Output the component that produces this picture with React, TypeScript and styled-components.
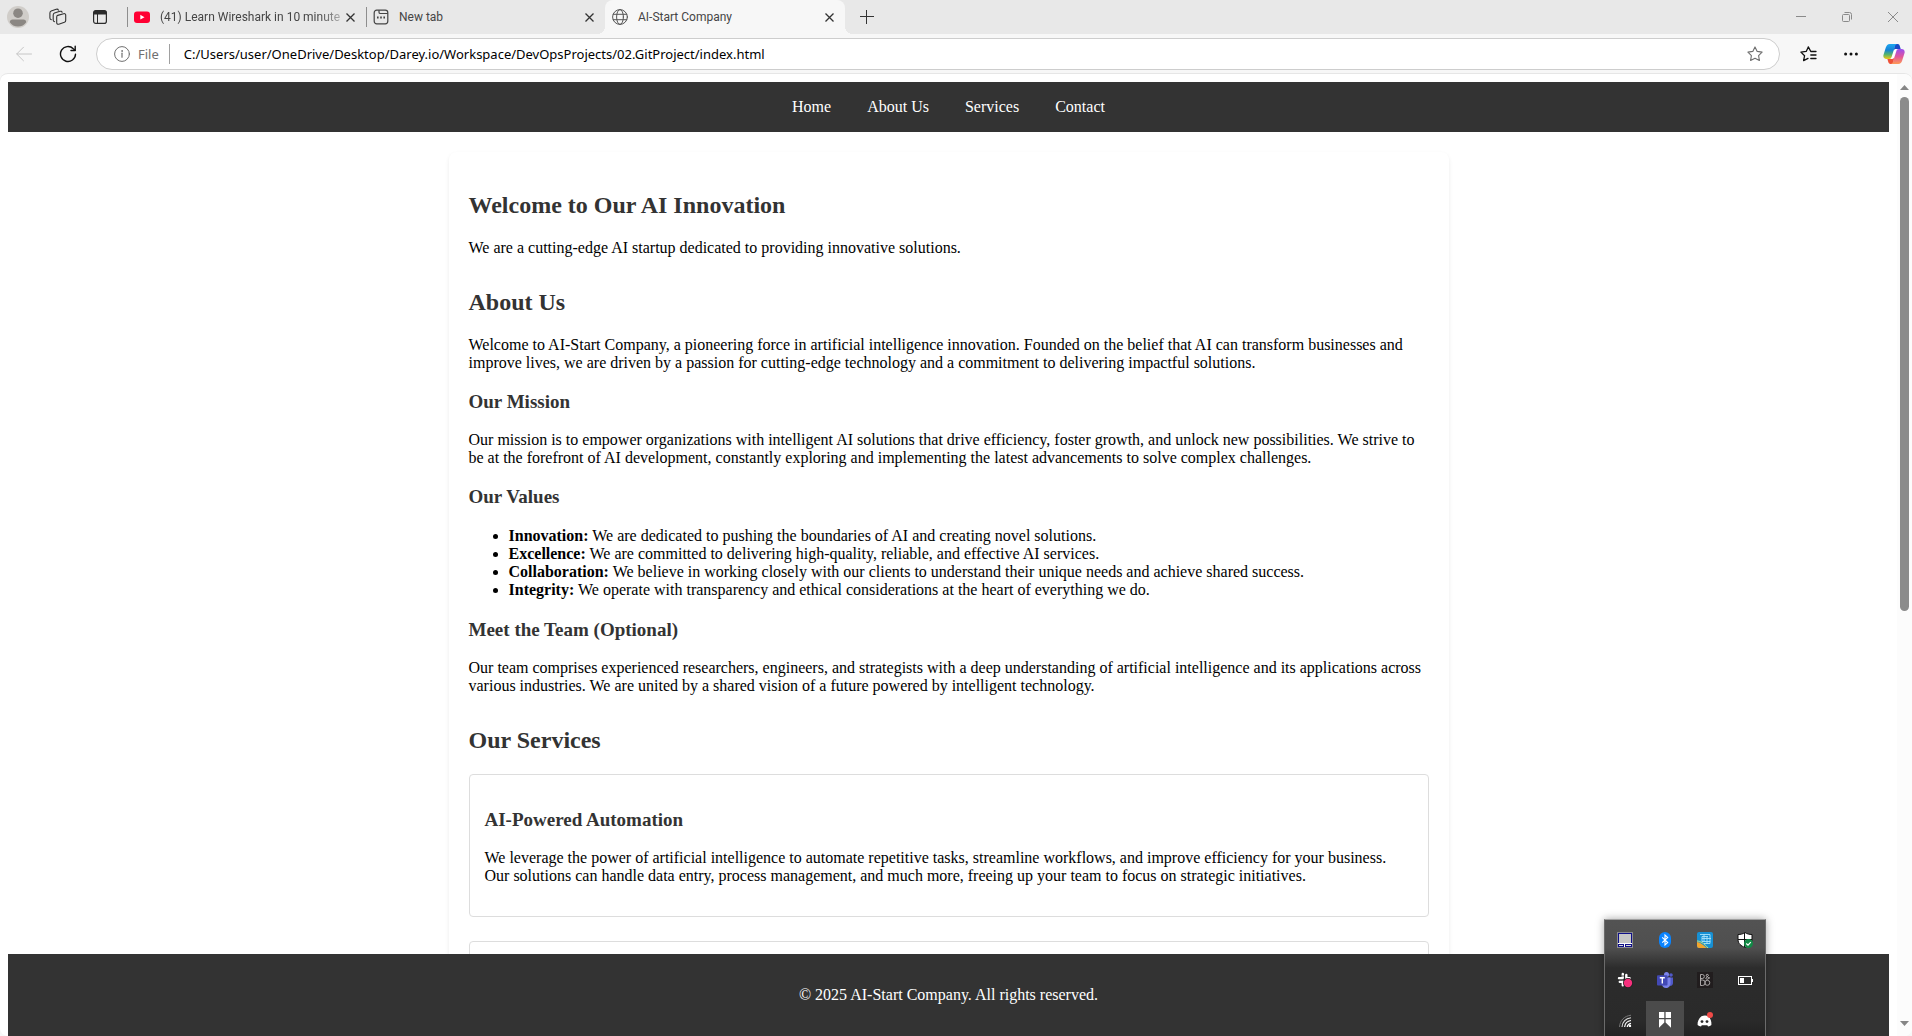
import React from "react";
import styled, { createGlobalStyle } from "styled-components";

const ui = `"Noto Sans", "Open Sans", sans-serif`;
const tabFont = `Roboto, "Noto Sans", sans-serif`;
const serif = `"Liberation Serif", "Times New Roman", serif`;

const GlobalStyle = createGlobalStyle`
  *, *::before, *::after { box-sizing: border-box; }
  body { margin: 0; background: #f7f7f7; }
`;

const Window = styled.div`
  display: flex;
  flex-direction: column;
  height: 100vh;
  overflow: hidden;
  background: #f7f7f7;
  font-family: ${ui};
`;

/* ---------- tab strip ---------- */

const TabStrip = styled.header`
  display: flex;
  align-items: center;
  flex: none;
  height: 34px;
  background: #e8e8e8;
`;

const StripTools = styled.div`
  display: flex;
  align-items: center;
  gap: 8px;
  width: 127px;
  flex: none;
`;

const IconButton = styled.button<{ $width?: number }>`
  display: flex;
  align-items: center;
  justify-content: center;
  flex: none;
  width: ${(p) => p.$width ?? 32}px;
  height: 32px;
  padding: 0;
  border: 0;
  background: transparent;
  color: #333;
`;

const Tabs = styled.nav`
  display: flex;
  align-items: center;
  height: 100%;
  min-width: 0;
`;

const Divider = styled.span<{ $color?: string }>`
  flex: none;
  width: 1px;
  height: 20px;
  background: ${(p) => p.$color ?? "#8e8e8e"};
`;

const Tab = styled.div<{ $active?: boolean }>`
  position: relative;
  display: flex;
  align-items: center;
  width: ${(p) => (p.$active ? 240 : 238)}px;
  height: 34px;
  padding: 0 8px 0 ${(p) => (p.$active ? 7 : 6)}px;
  border-radius: 8px 8px 0 0;
  background: ${(p) => (p.$active ? "#f7f7f7" : "transparent")};

  &::before,
  &::after {
    content: "";
    display: ${(p) => (p.$active ? "block" : "none")};
    position: absolute;
    bottom: 0;
    width: 8px;
    height: 8px;
  }
  &::before {
    right: 100%;
    background: radial-gradient(circle at 0 0, transparent 8px, #f7f7f7 8px);
  }
  &::after {
    left: 100%;
    background: radial-gradient(circle at 100% 0, transparent 8px, #f7f7f7 8px);
  }
`;

const TabTitle = styled.a<{ $fade?: boolean }>`
  flex: 1;
  margin-left: 10px;
  white-space: nowrap;
  font-family: ${tabFont};
  font-size: 12px;
  line-height: 16px;
  color: #454545;
  text-decoration: none;
  ${(p) =>
    p.$fade &&
    "mask-image: linear-gradient(to right, #000 calc(100% - 24px), rgba(0, 0, 0, 0.3));"}
`;

const CloseButton = styled.button`
  display: flex;
  align-items: center;
  justify-content: center;
  width: 16px;
  height: 16px;
  flex: none;
  padding: 0;
  border: 0;
  background: transparent;
  color: #333;
`;

const WindowControls = styled.div`
  display: flex;
  gap: 8px;
  margin-left: auto;
`;

/* ---------- address bar ---------- */

const Toolbar = styled.div`
  display: flex;
  align-items: center;
  gap: 12px;
  flex: none;
  height: 39px;
  padding: 0 2px 0 8px;
`;

const AddressBar = styled.form`
  display: flex;
  align-items: center;
  flex: 1;
  min-width: 0;
  height: 32px;
  padding: 0 8px 0 17px;
  border: 1px solid #cdcdcd;
  border-radius: 16px;
  background: #fff;
`;

const SchemeLabel = styled.label`
  display: flex;
  align-items: center;
  gap: 8px;
  margin-right: 10px;
  font-size: 13px;
  line-height: 20px;
  color: #707070;
`;

const AddressInput = styled.input`
  flex: 1;
  min-width: 0;
  height: 24px;
  margin-left: 14px;
  padding: 0;
  border: 0;
  outline: 0;
  background: transparent;
  font-family: ${ui};
  font-size: 13px;
  color: #000;
`;

const ToolbarActions = styled.div`
  display: flex;
  gap: 11px;
`;

/* ---------- page viewport ---------- */

const Viewport = styled.div`
  display: flex;
  flex: 1;
  min-height: 0;
  overflow: hidden;
  border-top: 1px solid #e6e6e6;
  border-radius: 8px;
  background: #fff;
`;

const Page = styled.div`
  display: flex;
  flex-direction: column;
  flex: 1;
  min-width: 0;
  padding: 8px 8px 0;
  font-family: ${serif};
  font-size: 16px;
  line-height: 18px;
  color: #000;
`;

const SiteNav = styled.nav`
  display: flex;
  justify-content: center;
  gap: 36px;
  flex: none;
  padding: 16px;
  background: #333;
`;

const NavLink = styled.a`
  color: #fff;
  text-decoration: none;
`;

const Scroller = styled.main`
  flex: 1;
  min-height: 0;
  overflow: hidden;
  padding-top: 20px;
`;

const Container = styled.div`
  max-width: 1000px;
  margin: 0 auto;
  padding: 20px;
  border-radius: 8px;
  background: #fff;
  box-shadow: 0 2px 4px rgba(0, 0, 0, 0.08);
`;

const Section = styled.section`
  display: flow-root;
  margin-bottom: -4px;
`;

const Title = styled.h2`
  margin: 20px 0;
  font-size: 24px;
  line-height: 27px;
  color: #333;
`;

const Subtitle = styled.h3`
  margin: 19px 0;
  font-size: 19px;
  line-height: 21px;
  color: #333;
`;

const Text = styled.p`
  margin: 16px 0;
`;

const Values = styled.ul`
  margin: 20px 0;
  padding-left: 40px;
`;

const ServiceCard = styled.article`
  display: flow-root;
  margin-bottom: 24px;
  padding: 15px;
  border: 1px solid #ddd;
  border-radius: 4px;
`;

const SiteFooter = styled.footer`
  flex: none;
  padding: 16px;
  background: #333;
  color: #fff;
  text-align: center;
`;

const Scrollbar = styled.div`
  display: flex;
  flex-direction: column;
  align-items: center;
  flex: none;
  width: 15px;
  padding: 8px 0 8px;
  background: #fcfcfc;
`;

const ScrollArrow = styled.button`
  display: flex;
  align-items: center;
  justify-content: center;
  width: 15px;
  height: 10px;
  padding: 0;
  border: 0;
  background: transparent;
`;

const Track = styled.div`
  flex: 1;
  width: 9px;
  margin: 5px 0 4px;
`;

const Thumb = styled.div`
  height: 56%;
  border-radius: 5px;
  background: #8b8b8b;
`;

/* ---------- tray flyout ---------- */

const Tray = styled.aside`
  position: fixed;
  right: 146px;
  bottom: 0;
  display: grid;
  grid-template-columns: repeat(4, 40px);
  grid-auto-rows: 40px;
  height: 117px;
  overflow: hidden;
  border: 1px solid #6b6b6b;
  border-top-color: #a0a0a0;
  border-bottom: 0;
  background: linear-gradient(#535353 0, #4f4f4f 28px, #2c2c2c 48px, #2a2a2a 100px, #222 100%);
  box-shadow: 0 0 8px rgba(0, 0, 0, 0.35);
`;

const TrayButton = styled.button<{ $hot?: boolean }>`
  display: flex;
  align-items: center;
  justify-content: center;
  margin: 1px;
  padding: 0;
  border: 0;
  background: ${(p) => (p.$hot ? "#4b4b4b" : "transparent")};
`;

/* ---------- icons ---------- */

const line = { fill: "none", stroke: "currentColor", strokeLinecap: "round", strokeLinejoin: "round" } as const;

const ProfileIcon = () => (
  <svg width="22" height="22" viewBox="0 0 22 22">
    <circle cx="11" cy="11" r="11" fill="#d0cdc9" />
    <circle cx="11" cy="7.2" r="4.8" fill="#8b8783" />
    <path d="M2.8 16.2c0-1.8 1.2-2.7 2.7-2.7h11c1.5 0 2.7.9 2.7 2.7C17.5 19 14.500 20.500 11 20.500S4.500 19 2.800 16.200z" fill="#8b8783" />
  </svg>
);

const WorkspacesIcon = () => (
  <svg width="18" height="18" viewBox="0 0 18 18" {...line} strokeWidth="1.1">
    <path d="M8.700 7.400 14.700 5.700c1.200-.3 2 .3 2 1.400v5.400c0 .8-.5 1.500-1.300 1.800l-5.600 1.900c-1.200.4-2.100-.3-2.100-1.500V8.900c0-.8.300-1.300 1-1.500z" />
    <path d="M5.600 13.800c-.9-.1-1.400-.8-1.400-1.700V7c0-.9.500-1.600 1.300-1.900l5.400-1.800c1-.3 2 .1 2.200 1" />
    <path d="M2.400 11.700c-.9-.1-1.500-.8-1.500-1.700V5c0-.9.500-1.600 1.300-1.900l5-1.800c1-.3 1.900 0 2.200.9" />
  </svg>
);

const VerticalTabsIcon = () => (
  <svg width="16" height="16" viewBox="0 0 16 16">
    <rect x="1.600" y="1.600" width="12.800" height="12.800" rx="2.200" fill="none" stroke="#2b2b2b" strokeWidth="1.200" />
    <path d="M1.500 5.500V3.500a2 2 0 0 1 2-2h9a2 2 0 0 1 2 2v2z" fill="#2b2b2b" />
    <path d="M5.500 5v9.500" stroke="#2b2b2b" />
  </svg>
);

const YouTubeIcon = () => (
  <svg width="16" height="16" viewBox="0 0 16 16">
    <rect y="2.500" width="16" height="11.500" rx="3" fill="#ff0033" />
    <path d="M6.300 5.800v4.800l4.200-2.400z" fill="#fff" />
  </svg>
);

const NewTabIcon = () => (
  <svg width="16" height="16" viewBox="0 0 16 16" {...line} strokeWidth="1.200" color="#444">
    <rect x="1.200" y="1.200" width="13.600" height="13.600" rx="2.500" />
    <path d="M6 1.500v1.700c0 .8.500 1.300 1.300 1.300h7" />
    <path d="M4 8.500h1.600M7.200 8.500h1.600M10.400 8.500h1.600" strokeWidth="1.800" strokeLinecap="butt" />
  </svg>
);

const GlobeIcon = () => (
  <svg width="16" height="16" viewBox="0 0 16 16" {...line} color="#555">
    <circle cx="8" cy="8" r="7.400" />
    <ellipse cx="8" cy="8" rx="3.400" ry="7.400" />
    <path d="M1.300 5.300h13.400M1.300 10.700h13.400" />
  </svg>
);

const CrossIcon = () => (
  <svg width="9" height="9" viewBox="0 0 9 9" stroke="currentColor" strokeWidth="1.300">
    <path d="M.5.5l8 8M8.500.5l-8 8" />
  </svg>
);

const PlusIcon = () => (
  <svg width="14" height="14" viewBox="0 0 14 14" stroke="currentColor">
    <path d="M6.500 0v14M0 6.500h14" />
  </svg>
);

const MinimizeIcon = () => (
  <svg width="10" height="10" viewBox="0 0 10 10" stroke="#8a8a8a">
    <path d="M0 4.500h10" />
  </svg>
);

const RestoreIcon = () => (
  <svg width="10" height="10" viewBox="0 0 10 10" fill="none" stroke="#8a8a8a">
    <rect x=".5" y="2.500" width="7" height="7" rx="1" />
    <path d="M2.500.5h5a2 2 0 0 1 2 2v5" />
  </svg>
);

const WindowCloseIcon = () => (
  <svg width="10" height="10" viewBox="0 0 10 10" stroke="#8a8a8a">
    <path d="M0 0l10 10M10 0L0 10" />
  </svg>
);

const BackIcon = () => (
  <svg width="16" height="16" viewBox="0 0 16 16" {...line} color="#c6c6c6">
    <path d="M15.500 8H.8M7.500 1.200.7 8l6.800 6.800" />
  </svg>
);

const ReloadIcon = () => (
  <svg width="18" height="18" viewBox="0 0 18 18" {...line} strokeWidth="1.400" color="#111">
    <path d="M16.500 9.200A7.500 7.500 0 1 1 14.300 3.700L16 5.300" />
    <path d="M16.200 1.300v4.200H12" />
  </svg>
);

const InfoIcon = () => (
  <svg width="16" height="16" viewBox="0 0 16 16" {...line} color="#707070">
    <circle cx="8" cy="8" r="7.400" />
    <path d="M8 7.200v4" strokeWidth="1.200" />
    <circle cx="8" cy="5" r=".4" />
  </svg>
);

const StarIcon = () => (
  <svg width="16" height="16" viewBox="0 0 16 16" {...line} strokeWidth="1.100" color="#6e6e6e">
    <path d="M8 .9l2.200 4.500 4.900.7-3.500 3.500.8 4.900L8 12.200l-4.400 2.300.8-4.900L.9 6.100l4.900-.7z" />
  </svg>
);

const FavoritesIcon = () => (
  <svg width="17" height="16" viewBox="0 0 17 16" {...line} strokeWidth="1.300" color="#111">
    <path d="M16 5.500h-5.200L8.300.9 6.200 5.400.9 6.100l3.700 3.600-1 5 4.400-2.300" />
    <path d="M10.800 9h5.200M10.800 12.500h5.200" />
  </svg>
);

const MoreIcon = () => (
  <svg width="14" height="4" viewBox="0 0 14 4" fill="#111">
    <circle cx="1.600" cy="2" r="1.500" />
    <circle cx="7" cy="2" r="1.500" />
    <circle cx="12.400" cy="2" r="1.500" />
  </svg>
);

const CopilotIcon = () => (
  <svg width="22" height="22" viewBox="0 0 22 22">
    <defs>
      <linearGradient id="cpLeft" x1="0" y1="0" x2="0" y2="1">
        <stop offset="0" stopColor="#1ea7f0" />
        <stop offset=".4" stopColor="#1583d6" />
        <stop offset=".7" stopColor="#57b46a" />
        <stop offset="1" stopColor="#f3c614" />
      </linearGradient>
      <linearGradient id="cpRight" x1="0" y1="0" x2="0" y2="1">
        <stop offset="0" stopColor="#9b4df0" />
        <stop offset=".5" stopColor="#e0559c" />
        <stop offset="1" stopColor="#ff9a55" />
      </linearGradient>
    </defs>
    <path d="M12 1h2.800c1.200 0 1.700.8 2 1.900L17.700 6H13c-1.300 0-2 .6-2.400 1.900z" fill="#1a49c6" />
    <path d="M10 21H7.400c-1.200 0-1.800-.8-2.100-1.900L4.400 16H9c1.300 0 2-.6 2.400-1.900z" fill="#ee5138" />
    <path d="M14.500 1H6.800C4.600 1 3.500 2.600 2.800 4.600L.7 11.200C-.3 14 .8 16 3.500 16h2.700c1.300 0 2-.7 2.400-1.900L11.900 3.500C12.400 2 13 1 14.500 1z" fill="url(#cpLeft)" />
    <path d="M7.500 21h7.700c2.200 0 3.300-1.600 4-3.600l2.100-6.600c1-2.800-.1-4.800-2.800-4.800h-2.700c-1.300 0-2 .7-2.400 1.900l-3.300 10.600C9.600 20 9 21 7.500 21z" fill="url(#cpRight)" />
    <path d="M12.600 6.600h1.200c-.7.600-1 1.300-1.300 2.200l-1.800 5.500c-.3.800-.8 1.200-1.500 1.200H8c.5-.4.900-1 1.100-1.700l1.900-5.700c.3-.9.800-1.500 1.600-1.500z" fill="#fff" />
  </svg>
);

const ArrowIcon = ({ down }: { down?: boolean }) => (
  <svg width="9" height="5" viewBox="0 0 9 5" fill="#868686">
    <path d={down ? "M0 0h9L4.500 5z" : "M0 5h9L4.500 0z"} />
  </svg>
);

const TouchpadIcon = () => (
  <svg width="16" height="16" viewBox="0 0 16 16" shapeRendering="crispEdges">
    <rect width="16" height="16" fill="#8a8b90" />
    <rect x="1" y="1" width="14" height="14" fill="#10108a" />
    <rect x="2" y="2" width="12" height="9" fill="#c6c6c6" />
    <rect x="1" y="11" width="14" height="1" fill="#fff" />
    <rect x="2" y="13" width="4" height="1" fill="#d8d8d8" />
    <rect x="9" y="13" width="5" height="1" fill="#d8d8d8" />
    <rect x="7" y="12" width="1" height="3" fill="#fff" />
  </svg>
);

const BluetoothIcon = () => (
  <svg width="12" height="16" viewBox="0 0 12 16">
    <rect width="12" height="16" rx="6" fill="#0a84ff" />
    <path d="M3.200 5.300 8.700 10.600 6 13V3l2.700 2.400-5.500 5.300" fill="none" stroke="#fff" strokeWidth="1.100" />
  </svg>
);

const GraphicsIcon = () => (
  <svg width="16" height="16" viewBox="0 0 16 16">
    <rect width="16" height="16" rx="2" fill="#1690d4" />
    <path d="M0 10c3 0 6 3 10 6H2a2 2 0 0 1-2-2z" fill="#f2a52c" />
    <path d="M0 9c3 0 7 2 11 7" fill="none" stroke="#c7e27c" />
    <path d="M3 2.500h10v7H5v-5h6M7 2v7M5 6.500h9M10 4.500V12M7 11.500h6V9" fill="none" stroke="#a8e2fb" strokeWidth=".9" />
  </svg>
);

const ShieldIcon = () => (
  <svg width="16" height="16" viewBox="0 0 16 16">
    <path d="M8 .5c2 1.500 4.300 2 7 2v5c0 4-3 6.500-7 8-4-1.500-7-4-7-8v-5c2.700 0 5-.5 7-2z" fill="#fff" stroke="#111" />
    <path d="M7.500 1v14M1 7.500h14" stroke="#111" />
    <circle cx="11.500" cy="11.500" r="4.500" fill="#128a46" />
    <path d="M9.300 11.500l1.700 1.600 2.800-3" fill="none" stroke="#fff" strokeWidth="1.200" />
  </svg>
);

const SlackIcon = () => (
  <svg width="16" height="16" viewBox="0 0 16 16">
    <g stroke="#fff" strokeWidth="2.400" strokeLinecap="round">
      <path d="M5.800 2v3.200M9.300 3v2.500M2 6.200h3.600M9.300 6.200h3.300M2.800 9.700h2.800M5.800 9.700v3.600" />
    </g>
    <path d="M4.300 4h3M7.500 2v12M1 8h12" stroke="#222" strokeWidth=".8" />
    <circle cx="11" cy="11" r="5" fill="#222" />
    <circle cx="11" cy="11" r="4.200" fill="#f62f7c" />
  </svg>
);

const TeamsIcon = () => (
  <svg width="16" height="16" viewBox="0 0 16 16">
    <circle cx="9.500" cy="2.500" r="2.500" fill="#7b83eb" />
    <circle cx="14" cy="3" r="1.800" fill="#5059c9" />
    <path d="M11 5.500h5V11c0 2-1.500 3-3 3z" fill="#5059c9" />
    <path d="M5 5.500h8.500V11c0 3-2 5-4.500 5-2.200 0-4-1.500-4-4z" fill="#7b83eb" />
    <rect y="3.200" width="10.500" height="10.300" rx="1" fill="#4249b5" />
    <path d="M2.800 5.700h5M5.300 5.700v5.800" stroke="#fff" strokeWidth="1.400" />
  </svg>
);

const AudioIcon = () => (
  <svg width="16" height="16" viewBox="0 0 16 16" fill="none" stroke="#b9b5b5" strokeWidth=".9">
    <rect width="16" height="16" fill="#211d1e" stroke="none" />
    <path d="M3.500 2.500v11M3.500 2.500h1.800a2 2 0 0 1 0 4H3.500M3.500 8h2a2.700 2.700 0 0 1 0 5.500h-2" />
    <circle cx="10.300" cy="10.800" r="2.500" />
    <path d="M12.500 6.500 9 3.500c0-1.500 2.500-1.500 2.500 0L8.800 6c0 1.800 2.800 1.800 3.700-.8" />
  </svg>
);

const BatteryIcon = () => (
  <svg width="16" height="10" viewBox="0 0 16 10">
    <rect x="1.500" y="1.500" width="13" height="8" fill="none" stroke="#fff" />
    <rect x="3" y="3" width="4" height="5" fill="#fff" />
    <path d="M15.500 4v3" stroke="#fff" />
  </svg>
);

const WifiIcon = () => (
  <svg width="14" height="14" viewBox="0 0 14 14" fill="none">
    <path d="M1.500 14C2 7 6.500 3 13 2.200" stroke="#777" />
    <path d="M4 14c.5-5 3.700-8.500 9-9.200" stroke="#ddd" strokeWidth="1.100" />
    <path d="M6.600 14c.4-3.500 2.600-6 6.400-6.500" stroke="#fff" strokeWidth="1.200" />
    <path d="M9.200 14c.3-2 1.500-3.300 3.800-3.700" stroke="#fff" strokeWidth="1.200" />
    <circle cx="12" cy="13" r="1.200" fill="#fff" />
  </svg>
);

const BookmarkIcon = () => (
  <svg width="12" height="16" viewBox="0 0 12 16" fill="#fff">
    <path d="M0 0h5.300v6H0zM6.600 0H12v6H6.600zM0 7.200h5.300v3.300L0 15.800zM6.600 7.200H12v8.600l-5.400-5.300z" />
  </svg>
);

const DiscordIcon = () => (
  <svg width="16" height="16" viewBox="0 0 16 16">
    <path d="M4.500 4.200c2.300-.8 4.700-.8 7 0C13.500 6.500 14.800 9.500 14.400 13c-1 .9-2 1.300-3.300 1.500l-.8-1.300H4.800L4 14.500C2.700 14.300 1.500 13.900.6 13 .3 9.500 1.800 6.500 4.500 4.200z" fill="#fff" />
    <circle cx="5" cy="9.600" r="1.400" fill="#2a2a2a" />
    <circle cx="10" cy="9.600" r="1.400" fill="#2a2a2a" />
    <circle cx="13" cy="3" r="3" fill="#f04a47" />
  </svg>
);

/* ---------- content ---------- */

const tabs = [
  { title: "(41) Learn Wireshark in 10 minute", icon: <YouTubeIcon />, fade: true },
  { title: "New tab", icon: <NewTabIcon /> },
  { title: "AI-Start Company", icon: <GlobeIcon />, active: true },
];

const navItems = ["Home", "About Us", "Services", "Contact"];

const values = [
  ["Innovation:", "We are dedicated to pushing the boundaries of AI and creating novel solutions."],
  ["Excellence:", "We are committed to delivering high-quality, reliable, and effective AI services."],
  ["Collaboration:", "We believe in working closely with our clients to understand their unique needs and achieve shared success."],
  ["Integrity:", "We operate with transparency and ethical considerations at the heart of everything we do."],
];

const trayItems = [
  { label: "Touchpad", icon: <TouchpadIcon /> },
  { label: "Bluetooth", icon: <BluetoothIcon /> },
  { label: "Graphics", icon: <GraphicsIcon /> },
  { label: "Security", icon: <ShieldIcon /> },
  { label: "Slack", icon: <SlackIcon /> },
  { label: "Teams", icon: <TeamsIcon /> },
  { label: "Audio", icon: <AudioIcon /> },
  { label: "Battery", icon: <BatteryIcon /> },
  { label: "Wireless", icon: <WifiIcon /> },
  { label: "Bookmark", icon: <BookmarkIcon />, hot: true },
  { label: "Discord", icon: <DiscordIcon /> },
];

export default function App() {
  return (
    <Window>
      <GlobalStyle />
      <TabStrip>
        <StripTools>
          <IconButton $width={36} aria-label="Profile"><ProfileIcon /></IconButton>
          <IconButton $width={28} aria-label="Workspaces"><WorkspacesIcon /></IconButton>
          <IconButton $width={40} aria-label="Tab actions"><VerticalTabsIcon /></IconButton>
        </StripTools>
        <Tabs>
          {tabs.map((t) => (
            <React.Fragment key={t.title}>
              {!t.active && <Divider />}
              <Tab $active={t.active}>
                {t.icon}
                <TabTitle href="#" $fade={t.fade}>{t.title}</TabTitle>
                <CloseButton aria-label="Close tab"><CrossIcon /></CloseButton>
              </Tab>
            </React.Fragment>
          ))}
        </Tabs>
        <IconButton $width={44} aria-label="New tab"><PlusIcon /></IconButton>
        <WindowControls>
          <IconButton $width={38} aria-label="Minimize"><MinimizeIcon /></IconButton>
          <IconButton $width={38} aria-label="Restore"><RestoreIcon /></IconButton>
          <IconButton $width={38} aria-label="Close"><WindowCloseIcon /></IconButton>
        </WindowControls>
      </TabStrip>

      <Toolbar>
        <IconButton aria-label="Back"><BackIcon /></IconButton>
        <IconButton aria-label="Reload"><ReloadIcon /></IconButton>
        <AddressBar>
          <SchemeLabel htmlFor="address"><InfoIcon />File</SchemeLabel>
          <Divider $color="#a0a0a0" />
          <AddressInput
            id="address"
            spellCheck={false}
            defaultValue="C:/Users/user/OneDrive/Desktop/Darey.io/Workspace/DevOpsProjects/02.GitProject/index.html"
          />
          <IconButton type="button" aria-label="Add to favorites"><StarIcon /></IconButton>
        </AddressBar>
        <ToolbarActions>
          <IconButton aria-label="Favorites"><FavoritesIcon /></IconButton>
          <IconButton aria-label="Settings and more"><MoreIcon /></IconButton>
          <IconButton aria-label="Copilot"><CopilotIcon /></IconButton>
        </ToolbarActions>
      </Toolbar>

      <Viewport>
        <Page>
          <SiteNav>
            {navItems.map((item) => (
              <NavLink key={item} href="#">{item}</NavLink>
            ))}
          </SiteNav>
          <Scroller>
            <Container>
              <Section>
                <Title>Welcome to Our AI Innovation</Title>
                <Text>We are a cutting-edge AI startup dedicated to providing innovative solutions.</Text>
              </Section>
              <Section>
                <Title>About Us</Title>
                <Text>
                  Welcome to AI-Start Company, a pioneering force in artificial intelligence innovation. Founded on
                  the belief that AI can transform businesses and improve lives, we are driven by a passion for
                  cutting-edge technology and a commitment to delivering impactful solutions.
                </Text>
                <Subtitle>Our Mission</Subtitle>
                <Text>
                  Our mission is to empower organizations with intelligent AI solutions that drive efficiency, foster
                  growth, and unlock new possibilities. We strive to be at the forefront of AI development, constantly
                  exploring and implementing the latest advancements to solve complex challenges.
                </Text>
                <Subtitle>Our Values</Subtitle>
                <Values>
                  {values.map(([name, text]) => (
                    <li key={name}><strong>{name}</strong> {text}</li>
                  ))}
                </Values>
                <Subtitle>Meet the Team (Optional)</Subtitle>
                <Text>
                  Our team comprises experienced researchers, engineers, and strategists with a deep understanding of
                  artificial intelligence and its applications across various industries. We are united by a shared
                  vision of a future powered by intelligent technology.
                </Text>
              </Section>
              <Section>
                <Title>Our Services</Title>
                <ServiceCard>
                  <Subtitle>AI-Powered Automation</Subtitle>
                  <Text>
                    We leverage the power of artificial intelligence to automate repetitive tasks, streamline
                    workflows, and improve efficiency for your business. Our solutions can handle data entry, process
                    management, and much more, freeing up your team to focus on strategic initiatives.
                  </Text>
                </ServiceCard>
                <ServiceCard />
              </Section>
            </Container>
          </Scroller>
          <SiteFooter>
            <Text>© 2025 AI-Start Company. All rights reserved.</Text>
          </SiteFooter>
        </Page>
        <Scrollbar>
          <ScrollArrow aria-label="Scroll up"><ArrowIcon /></ScrollArrow>
          <Track><Thumb /></Track>
          <ScrollArrow aria-label="Scroll down"><ArrowIcon down /></ScrollArrow>
        </Scrollbar>
      </Viewport>

      <Tray aria-label="Notification area">
        {trayItems.map((item) => (
          <TrayButton key={item.label} $hot={item.hot} aria-label={item.label}>{item.icon}</TrayButton>
        ))}
      </Tray>
    </Window>
  );
}
